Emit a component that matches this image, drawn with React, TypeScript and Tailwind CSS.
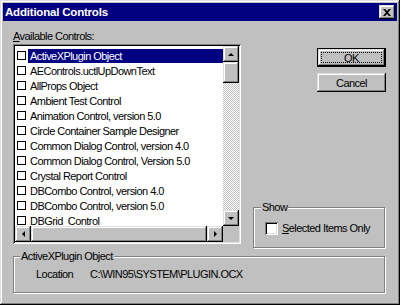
import React from "react";

const controls = [
  "ActiveXPlugin Object",
  "AEControls.uctlUpDownText",
  "AllProps Object",
  "Ambient Test Control",
  "Animation Control, version 5.0",
  "Circle Container Sample Designer",
  "Common Dialog Control, version 4.0",
  "Common Dialog Control, Version 5.0",
  "Crystal Report Control",
  "DBCombo Control, version 4.0",
  "DBCombo Control, version 5.0",
  "DBGrid  Control",
];

const raised =
  "bg-[#c0c0c0] shadow-[inset_-1px_-1px_0_#000,inset_1px_1px_0_#dfdfdf,inset_-2px_-2px_0_#808080,inset_2px_2px_0_#fff]";

const Arrow = ({ dir }: { dir: "up" | "down" | "left" | "right" }) => {
  const pts = {
    up: "4,1 7,4 1,4",
    down: "1,1 7,1 4,4",
    left: "4,1 4,7 1,4",
    right: "1,1 1,7 4,4",
  }[dir];
  const vertical = dir === "up" || dir === "down";
  return (
    <svg width={vertical ? 8 : 5} height={vertical ? 5 : 8} viewBox={vertical ? "0 0 8 5" : "0 0 5 8"}>
      <polygon points={pts} fill="#000" />
    </svg>
  );
};

const ScrollButton = ({ dir }: { dir: "up" | "down" | "left" | "right" }) => (
  <div className={`w-[16px] h-[16px] flex items-center justify-center shrink-0 ${raised}`}>
    <Arrow dir={dir} />
  </div>
);

const track =
  "bg-[repeating-conic-gradient(#c0c0c0_0_25%,#ffffff_0_50%)] bg-[length:2px_2px]";

const App = () => {
  return (
    <div
      className="w-[400px] h-[305px] bg-[#c0c0c0] p-[3px] text-black text-[11px] tracking-[-0.55px] leading-[14px] shadow-[inset_-1px_-1px_0_#000,inset_1px_1px_0_#dfdfdf,inset_-2px_-2px_0_#808080,inset_2px_2px_0_#fff]"
      style={{ fontFamily: '"Liberation Sans", Arial, sans-serif' }}
    >
      {/* title bar */}
      <div className="h-[18px] bg-[#000080] flex items-center justify-between pl-[2px] pr-[2px]">
        <span className="text-white font-bold text-[11.5px] tracking-[-0.2px]">Additional Controls</span>
        <div className={`w-[16px] h-[14px] flex items-center justify-center ${raised}`}>
          <svg width="8" height="7" viewBox="0 0 8 7">
            <path d="M0 0h2l2 2 2-2h2L5 3.5 8 7H6L4 5 2 7H0l3-3.5z" fill="#000" />
          </svg>
        </div>
      </div>

      <div className="pl-[10px] pr-[12px] pt-[8px]">
        <div className="h-[14px] mb-[1px]">
          <span className="underline">A</span>vailable Controls:
        </div>

        <div className="flex gap-[12px] items-start">
          {/* list box */}
          <div className="w-[228px] h-[200px] bg-white p-[2px] shadow-[inset_1px_1px_0_#808080,inset_-1px_-1px_0_#fff,inset_2px_2px_0_#000,inset_-2px_-2px_0_#dfdfdf] grid grid-cols-[1fr_16px] grid-rows-[1fr_16px]">
            <div className="pt-[2px] overflow-hidden">
              {controls.map((c, i) => (
                <div key={c} className="h-[15px] flex items-center pl-[2px]">
                  <span className="w-[9px] h-[9px] border border-black bg-white shrink-0" />
                  <span
                    className={`ml-[2px] pl-[2px] flex-1 h-[14px] leading-[14px] whitespace-pre ${
                      i === 0 ? "bg-[#000080] text-white" : ""
                    }`}
                  >
                    {c}
                  </span>
                </div>
              ))}
            </div>
            <div className={`flex flex-col ${track}`}>
              <ScrollButton dir="up" />
              <div className={`h-[21px] w-[16px] ${raised}`} />
              <div className="flex-1" />
              <ScrollButton dir="down" />
            </div>
            <div className="flex bg-[#c0c0c0]">
              <ScrollButton dir="left" />
              <div className={`flex-1 h-[16px] ${raised}`} />
              <ScrollButton dir="right" />
            </div>
            <div className="bg-[#c0c0c0]" />
          </div>

          {/* right column */}
          <div className="flex-1 h-[204px] flex flex-col justify-between">
            <div className="flex flex-col items-end gap-[6px] pt-[4px] -mr-[1px]">
              <div className="w-[69px] h-[19px] border border-black">
                <div className={`w-full h-full p-[3px] ${raised}`}>
                  <div className="w-full h-full border border-dotted border-black flex items-center justify-center">
                    OK
                  </div>
                </div>
              </div>
              <div className={`w-[69px] h-[19px] flex items-center justify-center ${raised}`}>Cancel</div>
            </div>

            <fieldset className="h-[48px] border border-[#808080] shadow-[1px_1px_0_#fff,inset_1px_1px_0_#fff]">
              <legend className="ml-[7px] px-[1px] bg-[#c0c0c0] leading-[14px]">Show</legend>
              <div className="flex items-center gap-[4px] pl-[11px] pt-[7px]">
                <span className="w-[13px] h-[13px] bg-white shadow-[inset_1px_1px_0_#808080,inset_-1px_-1px_0_#fff,inset_2px_2px_0_#000,inset_-2px_-2px_0_#dfdfdf]" />
                <span className="whitespace-nowrap">
                  <span className="underline">S</span>elected Items Only
                </span>
              </div>
            </fieldset>
          </div>
        </div>

        <fieldset className="mt-[1px] h-[44px] border border-[#808080] shadow-[1px_1px_0_#fff,inset_1px_1px_0_#fff]">
          <legend className="ml-[6px] px-[1px] bg-[#c0c0c0] leading-[14px]">ActiveXPlugin Object</legend>
          <div className="flex pt-[4px] pl-[22px]">
            <span className="w-[54px]">Location</span>
            <span>C:\WIN95\SYSTEM\PLUGIN.OCX</span>
          </div>
        </fieldset>
      </div>
    </div>
  );
};

export default App;
